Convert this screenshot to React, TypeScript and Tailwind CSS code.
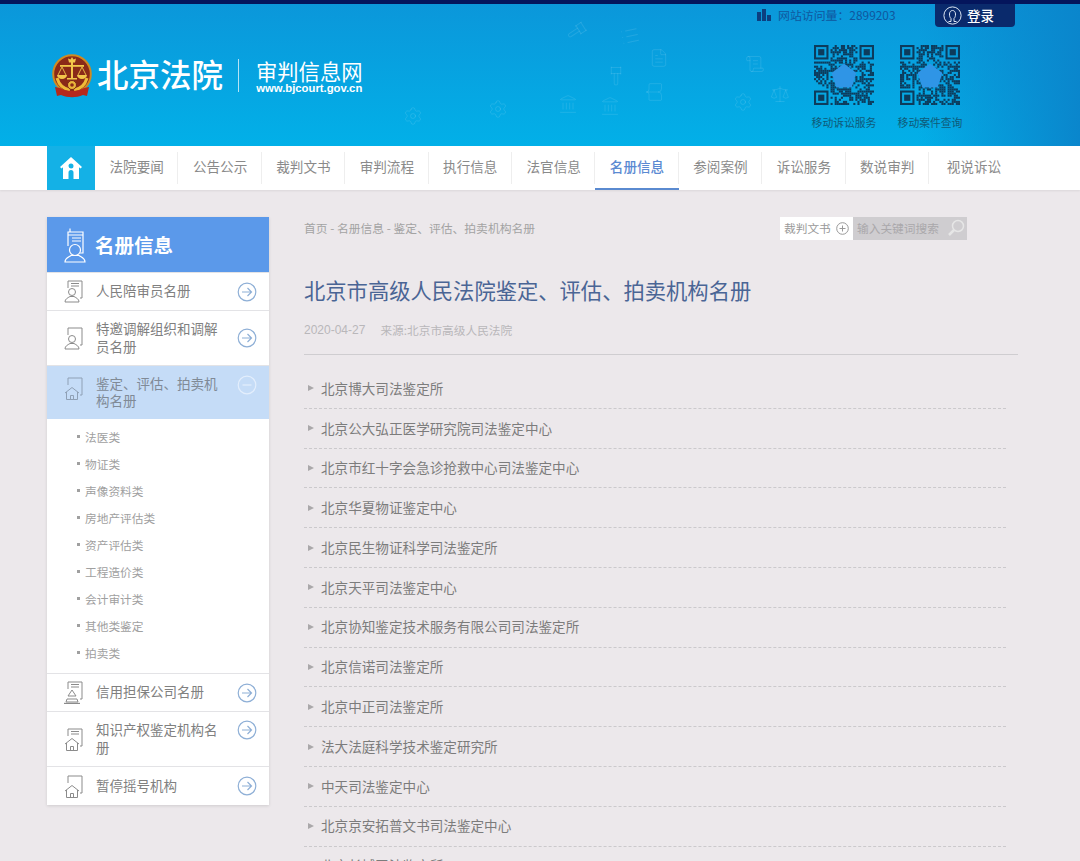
import { BookOpen, FileText, Gavel, Landmark, List, Scale, ScrollText, Settings } from 'lucide-react'

const navItems = ['法院要闻', '公告公示', '裁判文书', '审判流程', '执行信息', '法官信息', '名册信息', '参阅案例', '诉讼服务', '数说审判']

const subItems = ['法医类', '物证类', '声像资料类', '房地产评估类', '资产评估类', '工程造价类', '会计审计类', '其他类鉴定', '拍卖类']

const orgs = [
  '北京博大司法鉴定所',
  '北京公大弘正医学研究院司法鉴定中心',
  '北京市红十字会急诊抢救中心司法鉴定中心',
  '北京华夏物证鉴定中心',
  '北京民生物证科学司法鉴定所',
  '北京天平司法鉴定中心',
  '北京协知鉴定技术服务有限公司司法鉴定所',
  '北京信诺司法鉴定所',
  '北京中正司法鉴定所',
  '法大法庭科学技术鉴定研究所',
  '中天司法鉴定中心',
  '北京京安拓普文书司法鉴定中心',
  '北京长城司法鉴定所',
]

const bgIcons = [
  { Icon: Gavel, cls: 'left-[568px] top-[16px] rotate-12' },
  { Icon: List, cls: 'left-[620px] top-[22px] -rotate-12' },
  { Icon: FileText, cls: 'left-[649px] top-[44px]' },
  { Icon: Gavel, cls: 'left-[606px] top-[60px] -rotate-45' },
  { Icon: BookOpen, cls: 'left-[644px] top-[78px] rotate-90' },
  { Icon: Landmark, cls: 'left-[558px] top-[90px]' },
  { Icon: Settings, cls: 'left-[733px] top-[88px]' },
  { Icon: ScrollText, cls: 'left-[745px] top-[50px]' },
  { Icon: Scale, cls: 'left-[770px] top-[80px]' },
  { Icon: Settings, cls: 'left-[403px] top-[102px]' },
  { Icon: Settings, cls: 'left-[488px] top-[95px]' },
  { Icon: Landmark, cls: 'left-[600px] top-[92px]' },
]

function Emblem() {
  return (
    <svg width="40" height="45" viewBox="0 0 40 45" className="mt-[2px] shrink-0">
      <circle cx="20" cy="20" r="18.800" fill="#8a2a18" stroke="#d08a20" strokeWidth="2" />
      {/* crown */}
      <path d="M20 3l1.500 2.500 2.500-1-1 4h-6l-1-4 2.500 1z" fill="#f2c64a" />
      {/* scales */}
      <rect x="19" y="8" width="2" height="17" fill="#f2c64a" />
      <rect x="8" y="11" width="24" height="1.800" fill="#f2c64a" />
      <path d="M10 13l-4 8M10 13l4 8M30 13l-4 8M30 13l4 8" stroke="#f2c64a" strokeWidth="0.900" />
      <path d="M5 21a5 4 0 0 0 10 0zM25 21a5 4 0 0 0 10 0z" fill="#f2c64a" />
      <rect x="15" y="24" width="10" height="1.500" fill="#f2c64a" />
      {/* wreath and gear */}
      <path d="M5 24c2 7 7 11 13 12M35 24c-2 7-7 11-13 12" fill="none" stroke="#efba38" strokeWidth="3" />
      <circle cx="20" cy="31" r="4.500" fill="#e9b53a" stroke="#7a2414" />
      <circle cx="20" cy="31" r="1.800" fill="#8a2a18" />
      {/* ribbon */}
      <path d="M3 33l5 1c7 4 17 4 24 0l5-1-2 9-4-1c-7 3-15 3-22 0l-4 1z" fill="#b5281c" />
    </svg>
  )
}

// fixed pseudo random pattern, looks like a QR code at this size
function QrCode({ seed }: { seed: number }) {
  const size = 29
  const cells: { x: number; y: number }[] = []
  let s = seed
  const inFinder = (x: number, y: number) =>
    (x < 8 && y < 8) || (x > size - 9 && y < 8) || (x < 8 && y > size - 9)
  for (let y = 0; y < size; y++) {
    for (let x = 0; x < size; x++) {
      s = (s * 1103515245 + 12345) & 0x7fffffff
      if (!inFinder(x, y) && (s >> 16) % 100 < 56) cells.push({ x, y })
    }
  }
  const finders = [
    [0, 0],
    [size - 7, 0],
    [0, size - 7],
  ]
  return (
    <svg width="60" height="60" viewBox="0 0 29 29">
      {cells.map((c) => (
        <rect key={`${c.x}-${c.y}`} x={c.x} y={c.y} width="1" height="1" fill="#0d3b5c" />
      ))}
      {finders.map(([x, y]) => (
        <g key={`${x}-${y}`}>
          <rect x={x + 0.5} y={y + 0.5} width="6" height="6" fill="none" stroke="#0d3b5c" />
          <rect x={x + 2} y={y + 2} width="3" height="3" fill="#0d3b5c" />
        </g>
      ))}
      <path d="M14.5 9l6 4.500-2.300 7h-7.400l-2.300-7z" fill="#2f95e6" />
    </svg>
  )
}

function ArrowCircle({ minus = false }: { minus?: boolean }) {
  return (
    <svg width="20" height="20" viewBox="0 0 20 20" className="shrink-0">
      <circle cx="10" cy="10" r="8.800" fill="none" stroke={minus ? '#e3eefc' : '#8eafd6'} strokeWidth="1.200" />
      {minus ? (
        <path d="M5.500 10h9" stroke="#e3eefc" strokeWidth="1.200" />
      ) : (
        <path d="M5 10h9.500M10.500 6l4 4-4 4" fill="none" stroke="#8eafd6" strokeWidth="1.200" />
      )}
    </svg>
  )
}

function DocIcon({
  kind,
  lines = true,
  color = '#8b8b8b',
}: {
  kind: 'person' | 'house' | 'guard'
  lines?: boolean
  color?: string
}) {
  return (
    <svg width="19" height="23" viewBox="0 0 19 23" fill="none" stroke={color} strokeWidth="1" className="shrink-0">
      <path d="M4 8V1h14v17h-2" />
      {lines && <path d="M7 3.500h8M7 6h8" />}
      {kind === 'person' && (
        <>
          <circle cx="8" cy="12" r="3.500" />
          <path d="M1 22c0-3 2.500-4 5-5.500h4c2.500 1.500 5 2.500 5 5.500z" />
        </>
      )}
      {kind === 'house' && (
        <>
          <path d="M1 16l7-5.500L15 16" />
          <path d="M2.500 15v7.500h11V15M6.500 22.500v-4h3v4" />
        </>
      )}
      {kind === 'guard' && (
        <>
          <path d="M8 9l4 6H4zM3 18h10l1 3H2z" />
          <path d="M0 22.500h16" strokeWidth="1.400" />
        </>
      )}
    </svg>
  )
}

function SideRow({
  label,
  kind,
  h,
  lines = true,
  arrowTop = false,
  last = false,
}: {
  label: string
  kind: 'person' | 'house' | 'guard'
  h: string
  lines?: boolean
  arrowTop?: boolean
  last?: boolean
}) {
  return (
    <div className={`flex ${h} items-center bg-white pl-[17px] pr-[12px] ${last ? '' : 'border-b border-[#e3e3e6]'}`}>
      <DocIcon kind={kind} lines={lines} />
      <span className="ml-[13px] w-[127px] pb-[3px] text-[13.5px] leading-[18px] text-[#808080]">{label}</span>
      <div className={`ml-auto ${arrowTop ? 'self-start pt-[8px]' : ''}`}>
        <ArrowCircle />
      </div>
    </div>
  )
}

export default function App() {
  return (
    <div className="h-[861px] overflow-hidden bg-[#ece8eb] font-['Noto_Sans_CJK_SC','Liberation_Sans',sans-serif]">
      <div className="h-[4px] bg-[#04155c]" />

      <header className="relative h-[142px] bg-[linear-gradient(90deg,transparent_85%,#0a86cc_100%),linear-gradient(180deg,#0b97da_0%,#02b0e8_100%)]">
        {bgIcons.map(({ Icon, cls }, i) => (
          <Icon key={i} size={20} strokeWidth={1.2} className={`absolute ${cls} text-white/10`} />
        ))}

        <div className="relative flex h-full pl-[52px]">
          <div className="flex items-center">
            <Emblem />
            <span className="mb-[2px] ml-[5px] text-[31.5px] font-medium leading-none text-white">北京法院</span>
            <div className="ml-[15px] h-[33px] w-px bg-white/70" />
            <div className="ml-[17px] mt-[2px] flex flex-col items-center">
              <span className="text-[21.3px] leading-[24px] text-white">审判信息网</span>
              <span className="font-['Liberation_Sans',sans-serif] text-[11.3px] font-bold leading-[11px] text-white">www.bjcourt.gov.cn</span>
            </div>
          </div>

          <div className="ml-auto flex w-[323px] flex-col">
            <div className="flex h-[23px] items-start">
              <div className="flex items-center pt-[3px]">
                <svg width="14" height="12" viewBox="0 0 14 12" fill="#0c3f80">
                  <rect x="0" y="3" width="4" height="9" />
                  <rect x="5" y="0" width="4" height="12" />
                  <rect x="10" y="6" width="4" height="6" />
                </svg>
                <span className="ml-[7px] w-[118px] whitespace-nowrap text-[11.9px] leading-[16px] text-[#10579e]">网站访问量：2899203</span>
              </div>
              <div className="ml-[39px] flex h-[23px] w-[80px] items-center rounded-b-[4px] bg-[#0a2a6c] pl-[8px]">
                <svg width="19" height="19" viewBox="0 0 19 19" fill="none" stroke="#dfe8f5" strokeWidth="1">
                  <circle cx="9.500" cy="9.500" r="8.600" />
                  <path d="M5.500 15.500h2.500v-3c-2-1.500-2.500-8 1.500-8s3.500 6.500 1.500 8v3h2.500" />
                </svg>
                <span className="ml-[5px] text-[13.5px] font-medium leading-none text-white">登录</span>
              </div>
            </div>

            <div className="mt-[18px] flex gap-[26px] pl-[57px]">
              <div className="flex w-[60px] flex-col items-center">
                <QrCode seed={17} />
                <span className="mt-[9px] whitespace-nowrap text-[10.8px] leading-[16px] text-[#0f5a78]">移动诉讼服务</span>
              </div>
              <div className="flex w-[60px] flex-col items-center">
                <QrCode seed={4242} />
                <span className="mt-[9px] whitespace-nowrap text-[10.8px] leading-[16px] text-[#0f5a78]">移动案件查询</span>
              </div>
            </div>
          </div>
        </div>
      </header>

      <nav className="h-[44px] bg-white shadow-[0_1px_2px_rgba(0,0,0,0.08)]">
        <div className="ml-[47px] flex h-full w-[971px]">
          <div className="flex h-full w-[48px] items-center justify-center bg-[#14b1e6]">
            <svg width="22" height="22" viewBox="0 0 22 22" fill="#fff">
              <path
                d="M11 0L0 10l1.500 1.500L3 10.200V22h5.500v-6.500a2.500 2.500 0 0 1 5 0V22H19V10.200l1.500 1.300L22 10zM11 6.500a2.500 2.500 0 1 1 0 5 2.500 2.500 0 0 1 0-5z"
                fillRule="evenodd"
              />
            </svg>
          </div>
          {navItems.map((item) => (
            <div
              key={item}
              className={`relative flex h-full w-[83.4px] items-center justify-center text-[13.6px] ${
                item === '名册信息'
                  ? 'border-b-2 border-[#5a8ad0] pb-[1px] font-medium text-[#5b8ad2]'
                  : 'pb-[3px] text-[#8a8a8a]'
              }`}
            >
              {item}
              <span className="absolute right-0 top-[6px] h-[32px] w-px bg-[#eeeeee]" />
            </div>
          ))}
          <div className="flex h-full flex-1 items-center justify-center pb-[3px] pl-[1px] text-[13.6px] text-[#8a8a8a]">视说诉讼</div>
        </div>
      </nav>

      <div className="ml-[47px] flex w-[971px] items-start pt-[27px]">
        <aside className="w-[222px] shrink-0 shadow-[0_1px_3px_rgba(0,0,0,0.12)]">
          <div className="flex h-[55px] items-center bg-[#5b99ea] pl-[17px] text-white">
            <svg width="22" height="36" viewBox="0 0 22 36" fill="none" stroke="#fff" strokeWidth="1.200">
              <path d="M4 19V5h15v21h-3M6 1.500v3.500M4 8h15M8 11h9M8 14h9" />
              <circle cx="11" cy="23" r="5.500" />
              <path d="M1 35c0-4 4-5 6-6.500h8c2 1.500 6 2.500 6 6.500z" />
            </svg>
            <span className="ml-[9px] text-[19.5px] font-bold leading-none">名册信息</span>
          </div>
          <div className="h-px bg-[#e3e3e6]" />
          <SideRow label="人民陪审员名册" kind="person" h="h-[38px]" />
          <SideRow label="特邀调解组织和调解员名册" kind="person" lines={false} h="h-[55px]" />
          <div className="flex h-[53px] bg-[#c5dcf7] pl-[17px] pr-[12px] pt-[9px]">
            <div className="pt-[2px]">
              <DocIcon kind="house" lines={false} color="#8fa0b5" />
            </div>
            <span className="ml-[13px] w-[127px] text-[13.5px] leading-[17px] text-[#808a96]">鉴定、评估、拍卖机构名册</span>
            <div className="ml-auto">
              <ArrowCircle minus />
            </div>
          </div>
          <ul className="flex h-[255px] flex-col border-b border-[#e3e3e6] bg-white pl-[30px] pt-[5px]">
            {subItems.map((item) => (
              <li key={item} className="flex h-[27px] items-center pb-[2px] text-[11.7px] text-[#a0a0a0]">
                <span className="mr-[5px] h-[3px] w-[3px] bg-[#a0a0a0]" />
                {item}
              </li>
            ))}
          </ul>
          <SideRow label="信用担保公司名册" kind="guard" h="h-[38px]" />
          <SideRow label="知识产权鉴定机构名册" kind="house" h="h-[55px]" arrowTop />
          <SideRow label="暂停摇号机构" kind="house" lines={false} h="h-[38px]" last />
        </aside>

        <main className="ml-[35px] min-w-0 flex-1">
          <div className="flex h-[23px] items-center">
            <span className="w-[231px] whitespace-nowrap pb-[2px] text-[11.8px] text-[#a3a3a3]">首页 - 名册信息 - 鉴定、评估、拍卖机构名册</span>
            <div className="ml-[245px] flex h-[23px]">
              <div className="flex w-[73px] items-center bg-white pb-[1px] pl-[4px] text-[11.7px] text-[#999]">
                裁判文书
                <svg width="13" height="13" viewBox="0 0 13 13" fill="none" stroke="#999" className="ml-[5px]">
                  <circle cx="6.500" cy="6.500" r="5.800" />
                  <path d="M3.500 6.500h6M6.500 3.500v6" />
                </svg>
              </div>
              <div className="flex w-[114px] items-center bg-[#cfcdd0] pb-[1px] pl-[4px] text-[11.7px] text-[#aaa8ab]">
                输入关键词搜索
                <svg width="18" height="18" viewBox="0 0 18 18" fill="none" stroke="#e6e6e6" strokeWidth="1.500" className="ml-auto mr-[2px]">
                  <circle cx="11" cy="7" r="5.500" />
                  <path d="M7 11l-5 5" strokeWidth="2.500" />
                </svg>
              </div>
            </div>
          </div>

          <h1 className="mt-[34px] text-[21.3px] font-normal leading-[32px] text-[#4a6595]">北京市高级人民法院鉴定、评估、拍卖机构名册</h1>

          <div className="mt-[15px] flex h-[18px] items-center text-[11.7px] text-[#b9b7ba]">
            <span className="font-['Liberation_Sans',sans-serif] text-[12px]">2020-04-27</span>
            <span className="ml-[15px]">来源:北京市高级人民法院</span>
          </div>

          <div className="mt-[15px] h-px bg-[#cfcdd0]" />

          <ul className="mt-[14px] w-[702px]">
            {orgs.map((org) => (
              <li key={org} className="flex h-[39.8px] items-center border-b border-dashed border-[#cbc9cc]">
                <span className="ml-[4px] h-0 w-0 border-y-[3.500px] border-l-[6px] border-y-transparent border-l-[#aaa8aa]" />
                <span className="ml-[7px] pb-[1px] text-[13.6px] text-[#7c7c7c]">{org}</span>
              </li>
            ))}
          </ul>
        </main>
      </div>
    </div>
  )
}
